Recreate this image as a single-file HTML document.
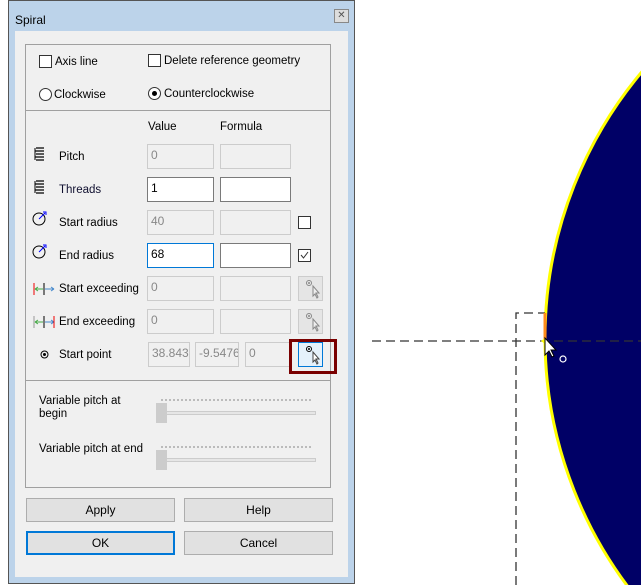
<!DOCTYPE html>
<html><head><style>
*{margin:0;padding:0;box-sizing:border-box}
html,body{width:641px;height:585px;overflow:hidden}
body{background:#fff;position:relative;font-family:"Liberation Sans",sans-serif;font-size:11.5px;color:#000}
.a{position:absolute}
.t{position:absolute;white-space:nowrap;line-height:14px}
.in{position:absolute;height:25px;border:1px solid #ccc;background:#f0f0f0;color:#888;padding:2px 3px;line-height:16px;overflow:hidden;font-size:12px}
.en{background:#fff;border-color:#7a7a7a;color:#000}
.cb{position:absolute;width:13px;height:13px;border:1px solid #333;background:#fff}
.btn{position:absolute;height:24px;background:#e1e1e1;border:1px solid #adadad;text-align:center;line-height:22px;font-size:12px}
.pk{position:absolute;width:25px;height:25px;background:#e5e5e5;border:1px solid #ccc}
</style></head><body>
<svg class="a" style="left:0;top:0" width="641" height="585">
<circle cx="959" cy="338" r="414" fill="#000066" stroke="#ffff00" stroke-width="3"/>
<path d="M372 341H641M516 585V313H545" stroke="#333" stroke-dasharray="9,5" fill="none" stroke-width="1.3"/>
<path d="M545 313V340" stroke="#ff8c1a" stroke-width="3"/>
<path d="M541 341l4-3v6z" fill="#ff0"/>
<path d="M545 338v17l4-4 3 6 2-1-3-6h5z" fill="#fff" stroke="#000" stroke-width="1"/>
<circle cx="563" cy="359" r="3" fill="none" stroke="#fff" stroke-width="1.2"/>
</svg>
<div class="a" style="left:8px;top:0;width:347px;height:584px;background:#bcd3ea;border:1px solid #555"></div>
<div class="t" style="left:15px;top:13px;font-size:12px">Spiral</div>
<div class="a" style="left:334px;top:9px;width:15px;height:14px;border:1px solid #888;background:#ddd;color:#555;font-size:10px;text-align:center;line-height:12px">✕</div>
<div class="a" style="left:15px;top:31px;width:333px;height:546px;background:#f0f0f0"></div>
<div class="a" style="left:25px;top:44px;width:306px;height:444px;border:1px solid #a0a0a0"></div>
<div class="a" style="left:26px;top:110px;width:304px;height:1px;background:#a0a0a0"></div>
<div class="a" style="left:26px;top:380px;width:304px;height:1px;background:#a0a0a0"></div>

<div class="cb" style="left:39px;top:55px"></div><div class="t" style="left:55px;top:55px">Axis line</div>
<div class="cb" style="left:148px;top:54px"></div><div class="t" style="left:164px;top:54px">Delete reference geometry</div>
<div class="a" style="left:39px;top:88px;width:13px;height:13px;border:1px solid #333;border-radius:50%;background:#fff"></div><div class="t" style="left:54px;top:88px">Clockwise</div>
<div class="a" style="left:148px;top:87px;width:13px;height:13px;border:1px solid #333;border-radius:50%;background:#fff"><div class="a" style="left:3px;top:3px;width:5px;height:5px;border-radius:50%;background:#000"></div></div><div class="t" style="left:164px;top:87px">Counterclockwise</div>

<div class="t" style="left:148px;top:120px">Value</div>
<div class="t" style="left:220px;top:120px">Formula</div>

<svg class="a" style="left:34px;top:147px" width="12" height="14"><path d="M2 1H10M1 4H10M2 7H10M1 10H10M2 13H10" stroke="#000" stroke-width="1.2"/><path d="M1 1V13" stroke="#000"/></svg>
<div class="t" style="left:59px;top:150px">Pitch</div>
<div class="in" style="left:147px;top:144px;width:67px">0</div><div class="in" style="left:220px;top:144px;width:71px"></div>
<svg class="a" style="left:34px;top:180px" width="12" height="14"><path d="M2 1H10M1 4H10M2 7H10M1 10H10M2 13H10" stroke="#000" stroke-width="1.2"/><path d="M1 1V13" stroke="#000"/></svg>
<div class="t" style="left:59px;top:183px;color:#101030">Threads</div>
<div class="in en" style="left:147px;top:177px;width:67px">1</div><div class="in en" style="left:220px;top:177px;width:71px"></div>

<svg class="a" style="left:32px;top:210px" width="16" height="16"><circle cx="7" cy="9" r="6" fill="none" stroke="#000"/><path d="M7 9L13 3" stroke="#00f"/><path d="M11 2h3v3" stroke="#00f" fill="none"/></svg>
<div class="t" style="left:59px;top:216px">Start radius</div>
<div class="in" style="left:147px;top:210px;width:67px">40</div><div class="in" style="left:220px;top:210px;width:71px"></div>
<div class="cb" style="left:298px;top:216px"></div>
<svg class="a" style="left:32px;top:243px" width="16" height="16"><circle cx="7" cy="9" r="6" fill="none" stroke="#000"/><path d="M7 9L13 3" stroke="#00f"/><path d="M11 2h3v3" stroke="#00f" fill="none"/></svg>
<div class="t" style="left:59px;top:249px">End radius</div>
<div class="in en" style="left:147px;top:243px;width:67px;border-color:#0078d7">68</div><div class="in en" style="left:220px;top:243px;width:71px"></div>
<svg class="a" style="left:298px;top:249px" width="13" height="13"><rect x="0.5" y="0.5" width="12" height="12" fill="#fff" stroke="#333"/><path d="M3 6l2.5 3L10 3" stroke="#333" fill="none"/></svg>

<svg class="a" style="left:33px;top:282px" width="22" height="14"><path d="M1 1V13" stroke="#e00"/><path d="M11 1V13" stroke="#000"/><path d="M2 7H10M2 7l3-2M2 7l3 2" stroke="#4a4" fill="none"/><path d="M12 7H21M21 7l-3-2M21 7l-3 2" stroke="#48c" fill="none"/></svg>
<div class="t" style="left:59px;top:282px">Start exceeding</div>
<div class="in" style="left:147px;top:276px;width:67px">0</div><div class="in" style="left:220px;top:276px;width:71px"></div>
<div class="pk" style="left:298px;top:276px"><svg width="23" height="23"><circle cx="10" cy="6" r="2.5" fill="none" stroke="#888"/><circle cx="10" cy="6" r="1" fill="#888"/><path d="M14 9v10l2-2 2 4 1-1-2-4h3z" fill="#eee" stroke="#888"/></svg></div>
<svg class="a" style="left:33px;top:315px" width="22" height="14"><path d="M1 1V13" stroke="#999"/><path d="M11 1V13" stroke="#000"/><path d="M2 7H10M2 7l3-2M2 7l3 2" stroke="#4a4" fill="none"/><path d="M12 7H21M21 7l-3-2M21 7l-3 2" stroke="#48c" fill="none"/><path d="M21 1V13" stroke="#e00"/></svg>
<div class="t" style="left:59px;top:315px">End exceeding</div>
<div class="in" style="left:147px;top:309px;width:67px">0</div><div class="in" style="left:220px;top:309px;width:71px"></div>
<div class="pk" style="left:298px;top:309px"><svg width="23" height="23"><circle cx="10" cy="6" r="2.5" fill="none" stroke="#888"/><circle cx="10" cy="6" r="1" fill="#888"/><path d="M14 9v10l2-2 2 4 1-1-2-4h3z" fill="#eee" stroke="#888"/></svg></div>

<svg class="a" style="left:40px;top:350px" width="9" height="9"><circle cx="4.5" cy="4.5" r="3.5" fill="none" stroke="#000"/><circle cx="4.5" cy="4.5" r="1.5" fill="#000"/></svg>
<div class="t" style="left:59px;top:348px">Start point</div>
<div class="in" style="left:148px;top:342px;width:42px">38.8438</div>
<div class="in" style="left:195px;top:342px;width:44px">-9.5476</div>
<div class="in" style="left:245px;top:342px;width:46px">0</div>
<div class="a" style="left:289px;top:339px;width:48px;height:35px;border:3px solid #7a0000"></div>
<div class="pk" style="left:298px;top:342px;border-color:#0078d7;background:#e5f1fb"><svg width="23" height="23"><circle cx="10" cy="6" r="2.5" fill="none" stroke="#000"/><circle cx="10" cy="6" r="1" fill="#000"/><path d="M14 9v10l2-2 2 4 1-1-2-4h3z" fill="#fff" stroke="#444"/></svg></div>

<div class="t" style="left:39px;top:395px;line-height:13px">Variable pitch at<br>begin</div>
<div class="t" style="left:39px;top:442px">Variable pitch at end</div>
<div class="a" style="left:161px;top:399px;width:150px;height:2px;border-top:2px dotted #bbb"></div>
<div class="a" style="left:156px;top:411px;width:160px;height:4px;background:#e6e6e6;border:1px solid #ccc"></div>
<div class="a" style="left:156px;top:403px;width:11px;height:20px;background:#ccc"></div>
<div class="a" style="left:161px;top:446px;width:150px;height:2px;border-top:2px dotted #bbb"></div>
<div class="a" style="left:156px;top:458px;width:160px;height:4px;background:#e6e6e6;border:1px solid #ccc"></div>
<div class="a" style="left:156px;top:450px;width:11px;height:20px;background:#ccc"></div>

<div class="btn" style="left:26px;top:498px;width:149px">Apply</div>
<div class="btn" style="left:184px;top:498px;width:149px">Help</div>
<div class="btn" style="left:26px;top:531px;width:149px;border:2px solid #0078d7;line-height:20px">OK</div>
<div class="btn" style="left:184px;top:531px;width:149px">Cancel</div>
</body></html>
